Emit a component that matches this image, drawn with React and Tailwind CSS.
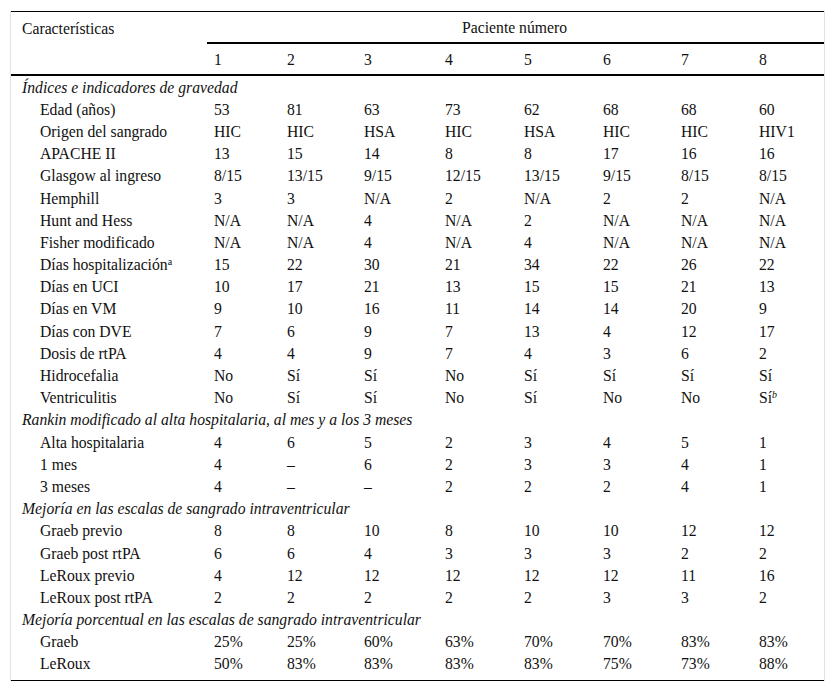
const widths = ["w-[196px]", "w-[73px]", "w-[77px]", "w-[81px]", "w-[79px]", "w-[79px]", "w-[78px]", "w-[78px]", "w-[72px]"];

const sections = [
  {
    title: "Índices e indicadores de gravedad",
    rows: [
      ["Edad (años)", ["53", "81", "63", "73", "62", "68", "68", "60"]],
      ["Origen del sangrado", ["HIC", "HIC", "HSA", "HIC", "HSA", "HIC", "HIC", "HIV1"]],
      ["APACHE II", ["13", "15", "14", "8", "8", "17", "16", "16"]],
      ["Glasgow al ingreso", ["8/15", "13/15", "9/15", "12/15", "13/15", "9/15", "8/15", "8/15"]],
      ["Hemphill", ["3", "3", "N/A", "2", "N/A", "2", "2", "N/A"]],
      ["Hunt and Hess", ["N/A", "N/A", "4", "N/A", "2", "N/A", "N/A", "N/A"]],
      ["Fisher modificado", ["N/A", "N/A", "4", "N/A", "4", "N/A", "N/A", "N/A"]],
      [
        <>
          Días hospitalización<sup className="text-[10px]">a</sup>
        </>,
        ["15", "22", "30", "21", "34", "22", "26", "22"],
      ],
      ["Días en UCI", ["10", "17", "21", "13", "15", "15", "21", "13"]],
      ["Días en VM", ["9", "10", "16", "11", "14", "14", "20", "9"]],
      ["Días con DVE", ["7", "6", "9", "7", "13", "4", "12", "17"]],
      ["Dosis de rtPA", ["4", "4", "9", "7", "4", "3", "6", "2"]],
      ["Hidrocefalia", ["No", "Sí", "Sí", "No", "Sí", "Sí", "Sí", "Sí"]],
      [
        "Ventriculitis",
        [
          "No", "Sí", "Sí", "No", "Sí", "No", "No",
          <>
            Sí<sup className="text-[10px] italic">b</sup>
          </>,
        ],
      ],
    ],
  },
  {
    title: "Rankin modificado al alta hospitalaria, al mes y a los 3 meses",
    rows: [
      ["Alta hospitalaria", ["4", "6", "5", "2", "3", "4", "5", "1"]],
      ["1 mes", ["4", "–", "6", "2", "3", "3", "4", "1"]],
      ["3 meses", ["4", "–", "–", "2", "2", "2", "4", "1"]],
    ],
  },
  {
    title: "Mejoría en las escalas de sangrado intraventricular",
    rows: [
      ["Graeb previo", ["8", "8", "10", "8", "10", "10", "12", "12"]],
      ["Graeb post rtPA", ["6", "6", "4", "3", "3", "3", "2", "2"]],
      ["LeRoux previo", ["4", "12", "12", "12", "12", "12", "11", "16"]],
      ["LeRoux post rtPA", ["2", "2", "2", "2", "2", "3", "3", "2"]],
    ],
  },
  {
    title: "Mejoría porcentual en las escalas de sangrado intraventricular",
    rows: [
      ["Graeb", ["25%", "25%", "60%", "63%", "70%", "70%", "83%", "83%"]],
      ["LeRoux", ["50%", "83%", "83%", "83%", "83%", "75%", "73%", "88%"]],
    ],
  },
];

export default function App() {
  return (
    <div
      className="bg-white min-h-screen pt-[10px] pl-[10px] text-[#111]"
      style={{ fontFamily: '"Liberation Serif", "Times New Roman", serif' }}
    >
      <div className="w-[815px] border-x border-[#e2e2e2] mt-px">
        <table className="table-fixed w-[813px] border-separate border-spacing-0 border-t border-b border-black text-[15.7px] leading-[17px] pb-[5px]">
          <colgroup>
            {widths.map((w, i) => (
              <col key={i} className={w} />
            ))}
          </colgroup>
          <thead>
            <tr>
              <td
                rowSpan={2}
                className="align-top pl-[11px] pt-[8px] border-b-2 border-black font-normal text-left"
              >
                Características
              </td>
              <td
                colSpan={8}
                className="h-[32px] text-center border-b-2 border-black align-middle pr-[2px]"
              >
                Paciente número
              </td>
            </tr>
            <tr>
              {[1, 2, 3, 4, 5, 6, 7, 8].map((n) => (
                <td key={n} className="h-[32px] pl-[7px] border-b-2 border-black align-middle">
                  {n}
                </td>
              ))}
            </tr>
          </thead>
          <tbody>
            {sections.map((s, si) => (
              <Section key={si} section={s} />
            ))}
          </tbody>
        </table>
      </div>
    </div>
  );
}

function Section({ section }) {
  return (
    <>
      <tr className="h-[22.2px]">
        <td colSpan={9} className="pl-[11px] italic whitespace-nowrap align-middle">
          {section.title}
        </td>
      </tr>
      {section.rows.map(([label, values], i) => (
        <tr key={i} className="h-[22.2px]">
          <td className="pl-[29px] whitespace-nowrap align-middle">{label}</td>
          {values.map((v, j) => (
            <td key={j} className="pl-[7px] whitespace-nowrap align-middle">
              {v}
            </td>
          ))}
        </tr>
      ))}
    </>
  );
}
